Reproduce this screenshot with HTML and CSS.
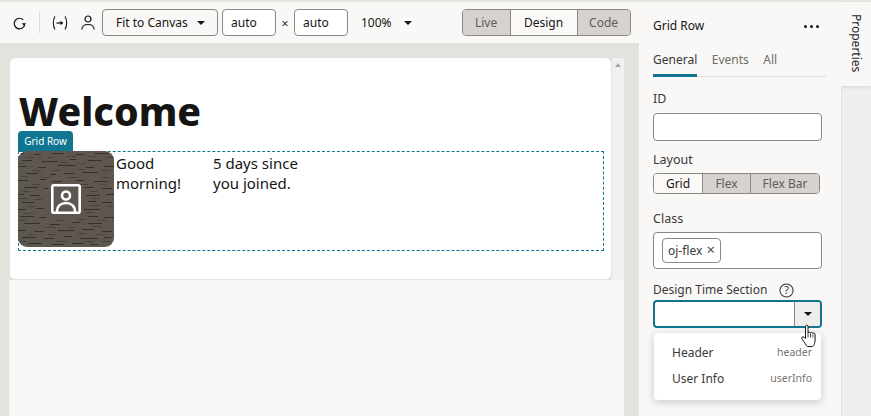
FILE: index.html
```html
<!DOCTYPE html>
<html lang="en">
<head>
<meta charset="utf-8">
<title>Grid Row</title>
<link rel="stylesheet" href="styles.css">
</head>
<body>
<div class="app">
  <main class="main">
    <header class="toolbar">
      <svg class="ico refresh" width="15" height="16" viewBox="0 0 15 16"><path d="M12.700 9.800A5.300 5.300 0 1 1 11.200 4.700" fill="none" stroke="#161513" stroke-width="1.200"/><path d="M9.800 8.300h4.400L12 10.800z" fill="#161513"/></svg>
      <span class="sep"></span>
      <svg class="ico vars" width="16" height="16" viewBox="0 0 16 16"><path d="M3 1.500C.8 5 .8 11 3 14.500M13 1.500C15.200 5 15.200 11 13 14.500" fill="none" stroke="#161513" stroke-width="1.100"/><path d="M4.500 8h6" stroke="#161513" stroke-width="1.300"/><path d="M8.500 5.800 11.200 8 8.500 10.200z" fill="#161513"/></svg>
      <svg class="ico user" width="14" height="15" viewBox="0 0 14 15"><circle cx="7" cy="4" r="3" fill="none" stroke="#161513" stroke-width="1.200"/><path d="M.8 14.500C1 11 3.500 9.500 7 9.500s6 1.500 6.200 5" fill="none" stroke="#161513" stroke-width="1.200"/></svg>
      <button class="select fit"><span>Fit to Canvas</span><i class="caret"></i></button>
      <input class="dim" value="auto" aria-label="Width">
      <span class="times">×</span>
      <input class="dim" value="auto" aria-label="Height">
      <button class="zoom"><span>100%</span><i class="caret"></i></button>
      <div class="seg modes">
        <button class="off">Live</button><button class="on">Design</button><button class="off">Code</button>
      </div>
    </header>
    <div class="stage">
      <div class="canvas">
        <div class="page">
          <h1>Welcome</h1>
          <div class="row">
            <span class="row-tag">Grid Row</span>
            <div class="avatar">
              <svg class="tex" width="96" height="96" viewBox="0 0 96 96">
                <rect width="96" height="96" fill="#5e5850"/>
                <path transform="translate(0 .5)" stroke="#2c2926" stroke-width="1" opacity=".8" d="M0 2h6M16 3h7M34 2h12M58 3h8M76 2h14M4 9h10M24 10h16M52 8h6M70 9h14M0 15h8M20 16h8M40 14h18M68 16h8M86 15h10M8 22h12M32 23h6M46 22h10M64 21h16M0 29h10M22 28h6M34 30h10M58 29h8M76 30h14M6 36h14M26 37h4M66 36h10M84 37h10M0 43h6M12 44h10M68 44h14M88 43h8M4 51h12M70 50h8M84 51h10M0 58h8M18 57h8M66 58h16M2 65h14M22 66h6M70 65h10M86 66h10M6 72h16M32 73h10M54 71h8M70 72h14M0 79h8M16 80h10M40 79h16M64 78h12M84 80h10M4 86h14M26 87h10M46 85h8M62 87h18M86 86h8M10 92h14M34 93h12M54 92h12M72 93h8"/>
                <path transform="translate(0 .5)" stroke="#3f3b36" stroke-width="1" opacity=".7" d="M8 6h8M30 6h6M48 5h10M70 5h8M88 6h8M0 12h6M42 11h8M60 12h8M14 19h10M34 19h8M60 18h6M82 19h10M2 25h8M24 26h8M50 26h10M84 26h8M14 33h8M46 34h8M62 33h8M82 33h6M4 40h8M72 40h8M0 47h10M16 48h8M74 47h8M10 55h8M72 54h10M88 55h8M6 62h10M68 61h8M0 69h8M38 69h8M60 68h8M80 69h8M28 76h10M50 76h8M74 75h10M10 83h6M30 83h8M60 82h8M78 83h10M0 90h8M38 90h10M68 90h8M84 90h8"/>
              </svg>
              <svg class="pic" width="30" height="30" viewBox="0 0 30 30"><path d="M6 28c0-6 4-9 9-9s9 3 9 9" fill="none" stroke="#fff" stroke-width="2.600"/><rect x="1.300" y="1.300" width="27.400" height="27.400" rx="1.500" fill="none" stroke="#fff" stroke-width="2.600"/><circle cx="15" cy="11.500" r="4" fill="none" stroke="#fff" stroke-width="2.600"/></svg>
            </div>
            <p class="cell greet">Good morning!</p>
            <p class="cell since">5 days since you joined.</p>
          </div>
        </div>
        <div class="scroll"><i></i></div>
      </div>
      <div class="below"></div>
    </div>
  </main>
  <aside class="panel">
    <div class="panel-head"><span>Grid Row</span><b class="dots"><i></i><i></i><i></i></b></div>
    <nav class="tabs"><a class="active">General</a><a>Events</a><a>All</a></nav>
    <label class="lbl lbl-id">ID</label>
    <div class="field f-id"></div>
    <label class="lbl lbl-layout">Layout</label>
    <div class="seg small"><button class="on">Grid</button><button class="off">Flex</button><button class="off">Flex Bar</button></div>
    <label class="lbl lbl-class">Class</label>
    <div class="field f-class"><span class="chip">oj-flex <em>×</em></span></div>
    <label class="lbl lbl-dts">Design Time Section <svg class="help" width="15" height="15" viewBox="0 0 16 16"><circle cx="8" cy="8" r="7" fill="none" stroke="#3a3836" stroke-width="1.100"/><text x="8" y="12" text-anchor="middle" class="q">?</text></svg></label>
    <div class="combo"><span class="combo-in"></span><span class="combo-btn"><i class="caret"></i></span></div>
    <ul class="menu">
      <li><span>Header</span><small>header</small></li>
      <li><span>User Info</span><small>userInfo</small></li>
    </ul>
    <svg class="hand" width="18" height="24" viewBox="0 0 18 24"><path d="M5.500 2.500c0-1.800 2.500-1.800 2.500 0v6.500c.3-1.300 2.400-1.300 2.500.2.400-1.100 2.300-1 2.400.4.500-.8 2.100-.6 2.200.8v5.600c0 3-1.500 6.500-2.500 6.500H7.500c-1.500-1.500-3-4-5.500-7.600-1-1.500.7-2.800 2-1.700l1.500 1.500z" fill="#fff" stroke="#161513" stroke-width="1"/><path d="M8 9v4.500M10.500 9.500v4M12.900 10.500v3" stroke="#161513" stroke-width=".8"/></svg>
  </aside>
  <div class="rail">
    <div class="rail-tab"><span>Properties</span></div>
    <div class="rail-rest"></div>
  </div>
</div>
</body>
</html>
```
FILE: styles.css
```css
* { box-sizing: border-box; }
html, body { margin: 0; height: 100%; overflow: hidden; }
body { font-family: "Noto Sans", "Open Sans", sans-serif; color: #161513; background: #f9f8f6; }
button { font: inherit; color: inherit; cursor: default; }

.app { display: flex; width: 871px; height: 416px; border-top: 2px solid #e5e3df; }

/* Main column */
.main { width: 639px; flex: none; display: flex; flex-direction: column; }
.toolbar { height: 41px; flex: none; display: flex; align-items: center; padding-left: 12px; background: #f9f8f6; }
.ico { flex: none; display: block; }
.sep { width: 1px; height: 21px; background: #dedcd8; margin: 0 12px; }
.vars { margin-right: 13px; }
.user { margin-right: 7px; }
.select, .dim, .zoom { height: 27px; font-size: 12px; }
.fit { width: 116px; margin-right: 4px; display: flex; align-items: center; justify-content: space-between; padding: 0 12px 0 13px; border: 1px solid #8c8985; border-radius: 4px; background: #f9f8f6; }
.caret { display: inline-block; width: 0; height: 0; border-left: 4px solid transparent; border-right: 4px solid transparent; border-top: 4px solid #161513; }
.dim { width: 54px; padding: 0 8px; border: 1px solid #8c8985; border-radius: 4px; background: #fff; color: #161513; font-family: inherit; }
.times { width: 18px; text-align: center; font-size: 13px; color: #3a3836; }
.zoom { display: flex; align-items: center; gap: 12px; margin-left: 13px; padding: 0; border: 0; background: none; }
.seg { display: flex; border: 1px solid #8c8985; border-radius: 4px; overflow: hidden; }
.seg button { padding: 0; border: 0; border-left: 1px solid #8c8985; background: #fbf9f8; }
.seg button:first-child { border-left: 0; }
.seg .off { background: #d6d2d0; color: #5f5c58; }
.modes { margin-left: 50px; height: 27px; font-size: 12px; }
.modes button:nth-child(1) { width: 47px; }
.modes button:nth-child(2) { width: 67px; }
.modes button:nth-child(3) { width: 53px; }

.stage { flex: 1; min-height: 0; display: flex; flex-direction: column; background: #e4e2dd; padding: 15px 15px 0 9px; }
.canvas { display: flex; height: 222px; flex: none; }
.page { flex: 1; min-width: 0; padding: 33px 7px 0 8px; background: #fff; border: 1px solid #e4e2dd; border-top: 0; border-radius: 6px; }
.scroll { width: 12px; flex: none; background: #f1f0f0; display: flex; justify-content: center; padding-top: 5px; }
.scroll i { width: 0; height: 0; border-left: 3px solid transparent; border-right: 3px solid transparent; border-bottom: 4px solid #a9a7a5; }
.below { flex: 1; background: #f9f8f6; }

h1 { margin: 0 0 0 1px; font-size: 39.200px; line-height: 40px; height: 40px; font-weight: 800; color: #161513; }

.row { position: relative; margin-top: 20px; display: flex; width: 586px; height: 100px; border: 1px dashed #0f7591; }
.row-tag { position: absolute; left: -1px; top: -21px; width: 55px; height: 21px; background: #0f7591; color: #fff; font-size: 10px; line-height: 21px; text-align: center; border-radius: 4px 4px 0 0; }
.avatar { position: relative; width: 96px; height: 96px; flex: none; margin: -1px 0 0 -1px; border-radius: 9px; overflow: hidden; }
.tex { display: block; }
.pic { position: absolute; left: 33px; top: 33px; }
.cell { margin: 0; font-size: 15px; line-height: 20px; color: #161513; }
.greet { width: 99px; padding: 1px 2px; }
.since { width: 100px; padding: 1px 0; }

/* Properties panel */
.panel { position: relative; width: 202px; flex: none; padding: 0 14px; background: #f9f8f6; }
.panel-head { height: 48px; padding-top: 14px; width: 173px; display: flex; justify-content: space-between; font-size: 12px; line-height: 20px; }
.dots { display: flex; gap: 3px; margin-top: 9px; margin-right: 7px; height: 3px; }
.dots i { width: 3px; height: 3px; border-radius: 50%; background: #161513; }
.tabs { display: flex; gap: 14.500px; width: 173px; height: 27px; border-bottom: 1px solid #dedcd8; font-size: 12px; line-height: 20px; color: #6f6c68; }
.tabs a { display: block; height: 27px; }
.tabs .active { color: #3a3836; border-bottom: 3px solid #0f7591; }
.lbl { display: block; font-size: 12.500px; line-height: 18px; color: #3a3836; }
.lbl-id { margin-top: 13px; }
.field { width: 169px; border: 1px solid #8c8985; border-radius: 4px; background: #fff; }
.f-id { height: 28px; margin-top: 5px; }
.lbl-layout { margin-top: 10px; }
.small { width: 167px; height: 21px; margin-top: 4px; font-size: 12px; line-height: 19px; background: #fbf9f8; }
.small button:nth-child(1) { width: 48px; }
.small button:nth-child(2) { width: 48px; }
.small button:nth-child(3) { flex: 1; }
.lbl-class { margin-top: 16px; }
.f-class { height: 37px; margin-top: 4px; padding: 5px 8px; }
.chip { display: inline-block; height: 25px; padding: 0 5px; border: 1px solid #8c8985; border-radius: 4px; font-size: 12px; line-height: 23px; color: #3a3836; }
.chip em { font-style: normal; margin-left: 1px; font-size: 15px; line-height: 20px; color: #55524e; }
.lbl-dts { margin-top: 12px; display: flex; align-items: center; gap: 12px; height: 18px; font-size: 12px; }
.help { flex: none; }
.q { font: 11.500px "Noto Sans", sans-serif; fill: #3a3836; }
.combo { display: flex; width: 169px; height: 28px; margin-top: 1px; border: 2px solid #0f7591; border-radius: 4px; overflow: hidden; background: #fff; }
.combo-in { flex: 1; }
.combo-btn { width: 26px; display: flex; align-items: center; justify-content: center; background: #eeedeb; border-left: 1px solid #8c8985; }
.menu { list-style: none; margin: 5px 0 0 1px; padding: 6px 9px 6px 18px; width: 167px; height: 67px; background: #fff; border-radius: 4px; box-shadow: 0 2px 8px rgba(0,0,0,.2); font-size: 12px; color: #3a3836; }
.menu li { display: flex; justify-content: space-between; align-items: center; height: 26px; }
.menu small { font-size: 10.500px; color: #77746f; }
.hand { position: absolute; left: 161px; top: 322px; }

/* Right rail */
.rail { flex: 1; display: flex; flex-direction: column; background: #f0efee; }
.rail-tab { height: 84px; background: #f9f8f6; display: flex; justify-content: center; box-shadow: 0 2px 3px rgba(0,0,0,.08); }
.rail-tab span { writing-mode: vertical-rl; font-size: 12px; line-height: 12px; margin-top: 12px; color: #2a2530; height: 62px; }
.rail-rest { flex: 1; border-left: 1px solid #e4e2dd; }
```
